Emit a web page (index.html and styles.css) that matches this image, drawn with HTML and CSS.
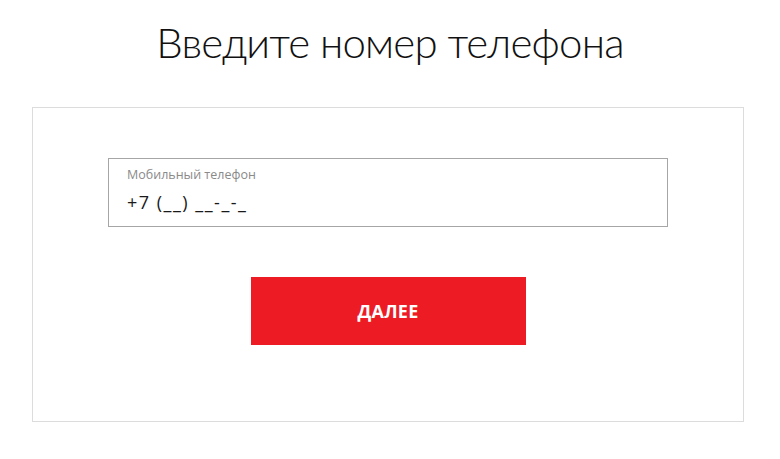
FILE: index.html
```html
<!DOCTYPE html>
<html lang="ru">
<head>
<meta charset="utf-8">
<link rel="stylesheet" href="styles.css">
</head>
<body>
<h1 class="title">Введите номер телефона</h1>
<div class="card">
  <div class="field">
    <div class="field-label">Мобильный телефон</div>
    <div class="field-value">+7 (__) __-_-_</div>
  </div>
  <button class="btn">ДАЛЕЕ</button>
</div>
</body>
</html>
```
FILE: styles.css
```css
html, body {
  margin: 0;
  padding: 0;
  background: #fff;
}
body {
  font-family: "Open Sans", "Liberation Sans", sans-serif;
  color: #111;
}
.title {
  margin: 0;
  height: 107px;
  padding-top: 14px;
  box-sizing: border-box;
  text-align: center;
  font-family: Lato, "Open Sans", sans-serif;
  font-weight: 300;
  font-size: 42px;
  letter-spacing: -0.8px;
  line-height: 56px;
  color: #111;
}
.card {
  margin-left: 32px;
  width: 712px;
  height: 315px;
  box-sizing: border-box;
  border: 1px solid #dcdcdc;
  padding-top: 50px;
  display: flex;
  flex-direction: column;
  align-items: center;
}
.field {
  width: 560px;
  height: 69px;
  box-sizing: border-box;
  border: 1px solid #a6a6a6;
  padding: 7px 0 0 18px;
}
.field-label {
  font-size: 12.5px;
  line-height: 18px;
  color: #8a8a8a;
}
.field-value {
  margin-top: 6px;
  font-size: 18px;
  line-height: 24px;
  letter-spacing: 1.5px;
  color: #1a1a1a;
}
.btn {
  margin-top: 50px;
  width: 275px;
  height: 68px;
  border: 0;
  background: #ed1c24;
  color: #fff;
  font-family: "Open Sans", "Liberation Sans", sans-serif;
  font-weight: 700;
  font-size: 18px;
  letter-spacing: 0.3px;
  cursor: pointer;
}
```
